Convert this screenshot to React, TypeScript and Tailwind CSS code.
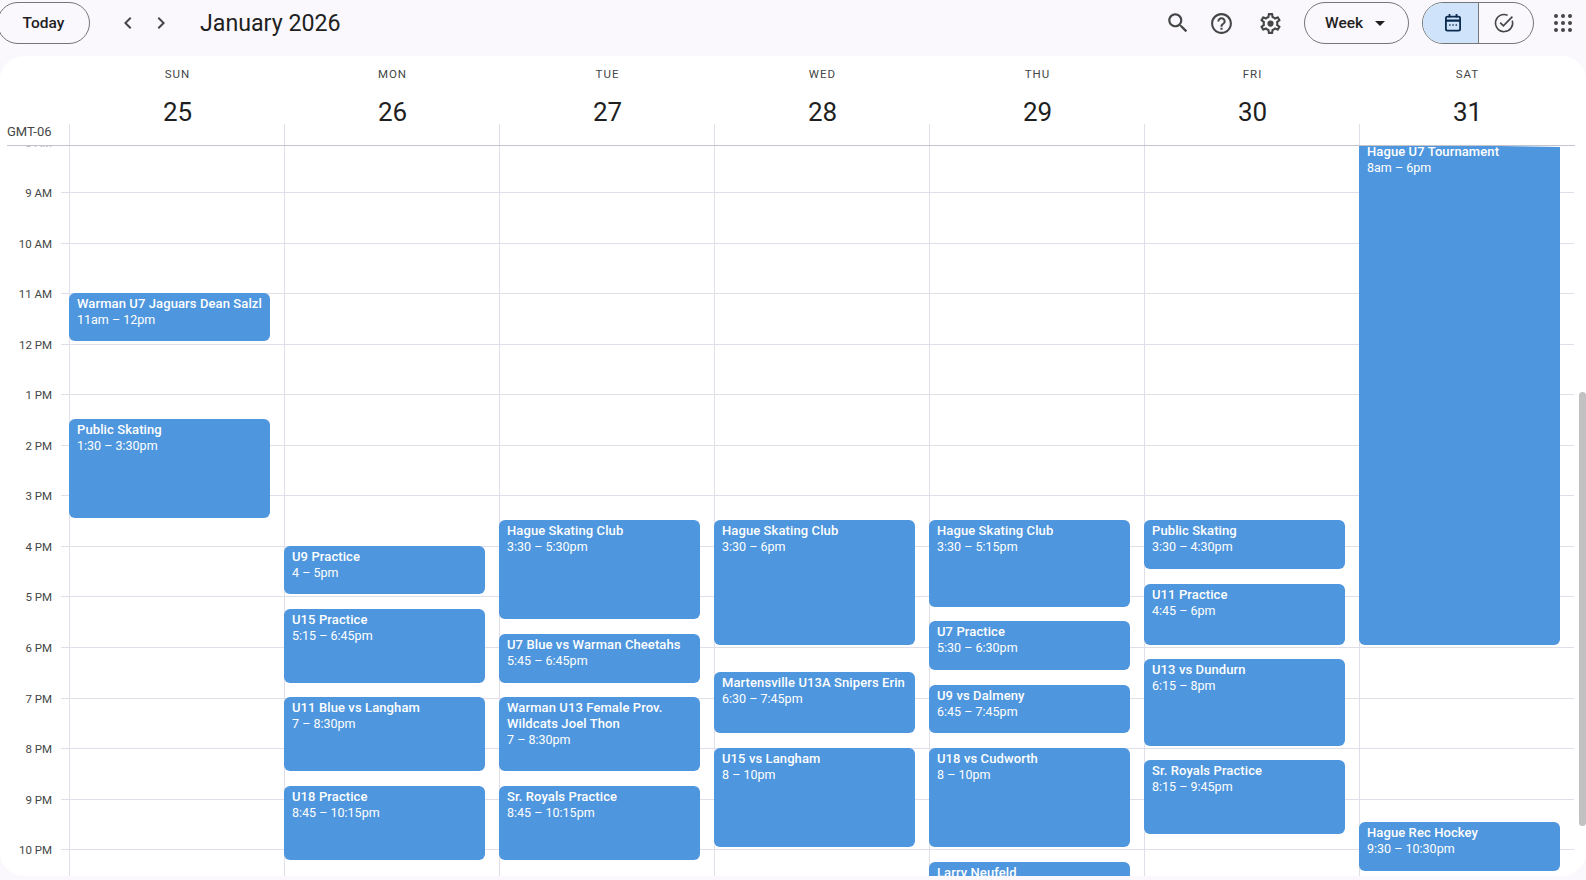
const HOUR = 50.56;
const hours = ["8 AM","9 AM","10 AM","11 AM","12 PM","1 PM","2 PM","3 PM","4 PM","5 PM","6 PM","7 PM","8 PM","9 PM","10 PM","11 PM"];
type Ev = { t: string[]; time: string; s: number; e: number };
const days: { name: string; num: number; events: Ev[] }[] = [
  { name: "SUN", num: 25, events: [
    { t: ["Warman U7 Jaguars Dean Salzl"], time: "11am – 12pm", s: 11, e: 12 },
    { t: ["Public Skating"], time: "1:30 – 3:30pm", s: 13.5, e: 15.5 },
  ]},
  { name: "MON", num: 26, events: [
    { t: ["U9 Practice"], time: "4 – 5pm", s: 16, e: 17 },
    { t: ["U15 Practice"], time: "5:15 – 6:45pm", s: 17.25, e: 18.75 },
    { t: ["U11 Blue vs Langham"], time: "7 – 8:30pm", s: 19, e: 20.5 },
    { t: ["U18 Practice"], time: "8:45 – 10:15pm", s: 20.75, e: 22.25 },
  ]},
  { name: "TUE", num: 27, events: [
    { t: ["Hague Skating Club"], time: "3:30 – 5:30pm", s: 15.5, e: 17.5 },
    { t: ["U7 Blue vs Warman Cheetahs"], time: "5:45 – 6:45pm", s: 17.75, e: 18.75 },
    { t: ["Warman U13 Female Prov.", "Wildcats Joel Thon"], time: "7 – 8:30pm", s: 19, e: 20.5 },
    { t: ["Sr. Royals Practice"], time: "8:45 – 10:15pm", s: 20.75, e: 22.25 },
  ]},
  { name: "WED", num: 28, events: [
    { t: ["Hague Skating Club"], time: "3:30 – 6pm", s: 15.5, e: 18 },
    { t: ["Martensville U13A Snipers Erin"], time: "6:30 – 7:45pm", s: 18.5, e: 19.75 },
    { t: ["U15 vs Langham"], time: "8 – 10pm", s: 20, e: 22 },
  ]},
  { name: "THU", num: 29, events: [
    { t: ["Hague Skating Club"], time: "3:30 – 5:15pm", s: 15.5, e: 17.25 },
    { t: ["U7 Practice"], time: "5:30 – 6:30pm", s: 17.5, e: 18.5 },
    { t: ["U9 vs Dalmeny"], time: "6:45 – 7:45pm", s: 18.75, e: 19.75 },
    { t: ["U18 vs Cudworth"], time: "8 – 10pm", s: 20, e: 22 },
    { t: ["Larry Neufeld"], time: "10:15 – 11:15pm", s: 22.25, e: 23.25 },
  ]},
  { name: "FRI", num: 30, events: [
    { t: ["Public Skating"], time: "3:30 – 4:30pm", s: 15.5, e: 16.5 },
    { t: ["U11 Practice"], time: "4:45 – 6pm", s: 16.75, e: 18 },
    { t: ["U13 vs Dundurn"], time: "6:15 – 8pm", s: 18.25, e: 20 },
    { t: ["Sr. Royals Practice"], time: "8:15 – 9:45pm", s: 20.25, e: 21.75 },
  ]},
  { name: "SAT", num: 31, events: [
    { t: ["Hague U7 Tournament"], time: "8am – 6pm", s: 8, e: 18 },
    { t: ["Hague Rec Hockey"], time: "9:30 – 10:30pm", s: 21.47, e: 22.47 },
  ]},
];

function Icon({ d, size = 24, className = "" }: { d: string; size?: number; className?: string }) {
  return (
    <svg width={size} height={size} viewBox="0 0 24 24" fill="currentColor" className={className}>
      <path d={d} />
    </svg>
  );
}

const SEARCH = "M15.5 14h-.79l-.28-.27C15.41 12.59 16 11.11 16 9.5 16 5.91 13.09 3 9.5 3S3 5.91 3 9.5 5.91 16 9.5 16c1.61 0 3.09-.59 4.23-1.57l.27.28v.79l5 4.99L20.49 19l-4.99-5zm-6 0C7.01 14 5 11.99 5 9.5S7.01 5 9.5 5 14 7.01 14 9.5 11.99 14 9.5 14z";
const HELP = "M11 18h2v-2h-2v2zm1-16C6.48 2 2 6.48 2 12s4.48 10 10 10 10-4.48 10-10S17.52 2 12 2zm0 18c-4.41 0-8-3.59-8-8s3.59-8 8-8 8 3.59 8 8-3.59 8-8 8zm0-14c-2.21 0-4 1.79-4 4h2c0-1.1.9-2 2-2s2 .9 2 2c0 2-3 1.75-3 5h2c0-2.25 3-2.5 3-5 0-2.21-1.79-4-4-4z";
const GEAR = "M19.43 12.98c.04-.32.07-.64.07-.98 0-.34-.03-.66-.07-.98l2.11-1.65c.19-.15.24-.42.12-.64l-2-3.46c-.09-.16-.26-.25-.44-.25-.06 0-.12.01-.17.03l-2.49 1c-.52-.4-1.08-.73-1.69-.98l-.38-2.65C14.46 2.18 14.25 2 14 2h-4c-.25 0-.46.18-.49.42l-.38 2.65c-.61.25-1.17.59-1.69.98l-2.49-1c-.06-.02-.12-.03-.18-.03-.17 0-.34.09-.43.25l-2 3.46c-.13.22-.07.49.12.64l2.11 1.65c-.04.32-.07.65-.07.98 0 .33.03.66.07.98l-2.11 1.65c-.19.15-.24.42-.12.64l2 3.46c.09.16.26.25.44.25.06 0 .12-.01.17-.03l2.49-1c.52.4 1.08.73 1.69.98l.38 2.65c.03.24.24.42.49.42h4c.25 0 .46-.18.49-.42l.38-2.65c.61-.25 1.17-.59 1.69-.98l2.49 1c.06.02.12.03.18.03.17 0 .34-.09.43-.25l2-3.46c.12-.22.07-.49-.12-.64l-2.11-1.65zm-1.98-1.71c.04.31.05.52.05.73 0 .21-.02.43-.05.73l-.14 1.13.89.7 1.08.84-.7 1.21-1.27-.51-1.04-.42-.9.68c-.43.32-.84.56-1.25.73l-1.06.43-.16 1.13-.2 1.35h-1.4l-.19-1.35-.16-1.13-1.06-.43c-.43-.18-.83-.41-1.23-.71l-.91-.7-1.06.43-1.27.51-.7-1.21 1.08-.84.89-.7-.14-1.13c-.03-.31-.05-.54-.05-.74s.02-.43.05-.73l.14-1.13-.89-.7-1.08-.84.7-1.21 1.27.51 1.04.42.9-.68c.43-.32.84-.56 1.25-.73l1.06-.43.16-1.13.2-1.35h1.39l.19 1.35.16 1.13 1.06.43c.43.18.83.41 1.23.71l.91.7 1.06-.43 1.27-.51.7 1.21-1.07.85-.89.7.14 1.13zM12 9a3 3 0 1 0 0 6 3 3 0 0 0 0-6z";

export default function App() {
  return (
    <div className="relative h-[880px] w-[1586px] overflow-hidden bg-[#faf8fc] font-['Roboto',sans-serif] text-[#1f1f1f] flex flex-col">
      {/* top bar */}
      <header className="h-14 flex items-start pt-[2px] shrink-0">
        <button className="ml-[-3px] h-[42px] w-[93px] rounded-full border border-[#747775] pt-px text-[15.5px] font-medium text-[#1f1f1f]">Today</button>
        <div className="ml-[26px] flex h-[42px] items-center gap-[9px] text-[#444746]">
          <svg width="24" height="24" viewBox="0 0 24 24" fill="currentColor"><path d="M15.41 7.41 14 6l-6 6 6 6 1.41-1.41L10.83 12z" /></svg>
          <svg width="24" height="24" viewBox="0 0 24 24" fill="currentColor"><path d="M10 6 8.59 7.41 13.17 12l-4.58 4.59L10 18l6-6z" /></svg>
        </div>
        <h1 className="ml-[27px] h-[42px] text-[23.2px] leading-[42px] font-normal">January 2026</h1>
        <div className="ml-auto flex h-[42px] items-center text-[#444746]">
          <Icon d={SEARCH} size={26} className="mr-[18px]" />
          <Icon d={HELP} size={25} className="mr-[24px]" />
          <Icon d={GEAR} size={25} className="mr-[21px]" />
          <button className="flex h-[42px] w-[105px] items-center rounded-full border border-[#747775] pl-[20px] pt-px text-[15.5px] font-medium text-[#1f1f1f]">
            Week
            <svg width="10" height="5" viewBox="0 0 10 5" className="ml-[12px]" fill="#1f1f1f"><path d="M0 0h10L5 5z" /></svg>
          </button>
          <div className="ml-[13px] flex h-[42px] w-[112px] rounded-full border border-[#747775] overflow-hidden">
            <div className="flex w-[56px] items-center justify-center bg-[#cfe4fb] border-r border-[#747775] pl-[5px] text-[#0b2a4f]">
              <svg width="20" height="20" viewBox="0 0 20 20" fill="none" stroke="currentColor" strokeWidth="1.8">
                <rect x="2.9" y="3.6" width="14.2" height="14" rx="1.6" />
                <path d="M3 7.6h14" strokeWidth="2.2" />
                <path d="M6.5 1v3.4M13.5 1v3.4" />
                <path d="M6.2 12h1.3M9.4 12h1.3M12.6 12h1.3" strokeWidth="1.3" />
              </svg>
            </div>
            <div className="flex flex-1 items-center justify-center pr-[5px] text-[#444746]">
              <svg width="22" height="22" viewBox="0 0 22 22" fill="none" stroke="currentColor" strokeWidth="1.5">
                <path d="M19.3 8.6A8.6 8.6 0 1 1 14.6 3.2" />
                <path d="M7.2 10.6l3.2 3.2 9-9.2" strokeWidth="1.7" />
              </svg>
            </div>
          </div>
          <svg width="18" height="18" viewBox="0 0 18 18" fill="currentColor" className="ml-[20px] mr-[14px]">
            {[2, 9, 16].flatMap((y) => [2, 9, 16].map((x) => <circle key={`${x}-${y}`} cx={x} cy={y} r="2" />))}
          </svg>
        </div>
      </header>

      {/* card */}
      <main className="mb-[4px] flex min-h-0 flex-1 flex-col overflow-hidden rounded-[24px] bg-white">
        <div className="flex h-[89px] shrink-0">
          <div className="flex w-[69px] shrink-0 items-end pb-[6px] pl-[7px] text-[13px] leading-[15px] text-[#444746]">GMT-06</div>
          {days.map((d) => (
            <div key={d.name} className="relative flex w-[215px] shrink-0 flex-col items-center pl-[2px] pt-[11px]">
              <span className="absolute bottom-0 left-0 h-[21px] w-px bg-[#dfdfe9]" />
              <span className="text-[11.5px] font-normal leading-[14px] tracking-[1px] text-[#444746]">{d.name}</span>
              <span className="mt-[15px] text-[26px] leading-[32px] text-[#1f1f1f]">{d.num}</span>
            </div>
          ))}
        </div>
        <div className="ml-[7px] mr-[11px] h-px shrink-0 bg-[#c4c5cc]" />
        <div className="relative min-h-0 flex-1 overflow-hidden">
          <div className="mt-[-4.5px] flex">
            <div className="w-[69px] shrink-0">
              {hours.map((h, i) => (
                <div key={h} className="relative flex justify-end" style={{ height: HOUR }}>
                  <span className={`absolute right-[17px] top-[-6px] whitespace-nowrap text-[11.5px] leading-[14px] ${i === 0 ? "text-[#b5b5b5]" : "text-[#444746]"}`}>{h}</span>
                  {i > 0 && <span className="h-px w-2 bg-[#dfdfe9]" />}
                </div>
              ))}
            </div>
            {days.map((d) => (
              <div key={d.name} className="relative w-[215px] shrink-0 border-l border-[#dfdfe9]">
                {hours.map((h, i) => (
                  <div key={h} className={i === 0 ? "" : "border-t border-[#dfdfe9]"} style={{ height: HOUR }} />
                ))}
                {d.events.map((ev) => (
                  <div
                    key={ev.t[0]}
                    className="absolute left-[-1px] w-[201px] overflow-hidden rounded-[6px] bg-[#4e96dd] pl-2 pt-[3px] text-[12.5px] leading-4 text-white"
                    style={{ top: (ev.s - 8) * HOUR - 0.4, height: (ev.e - ev.s) * HOUR - 2 }}
                  >
                    {ev.t.map((line) => (
                      <div key={line} className="whitespace-nowrap text-[13px] font-medium tracking-[0.1px]">{line}</div>
                    ))}
                    <div className="whitespace-nowrap">{ev.time}</div>
                  </div>
                ))}
              </div>
            ))}
          </div>
          <div className="absolute left-[1500px] top-0 h-px w-[60px] bg-linear-to-r from-transparent to-white" />
        </div>
      </main>
      {/* scrollbar thumb */}
      <div className="absolute right-0 top-[392px] h-[434px] w-[7px] rounded-full bg-[#c1c1c1]" />
    </div>
  );
}
